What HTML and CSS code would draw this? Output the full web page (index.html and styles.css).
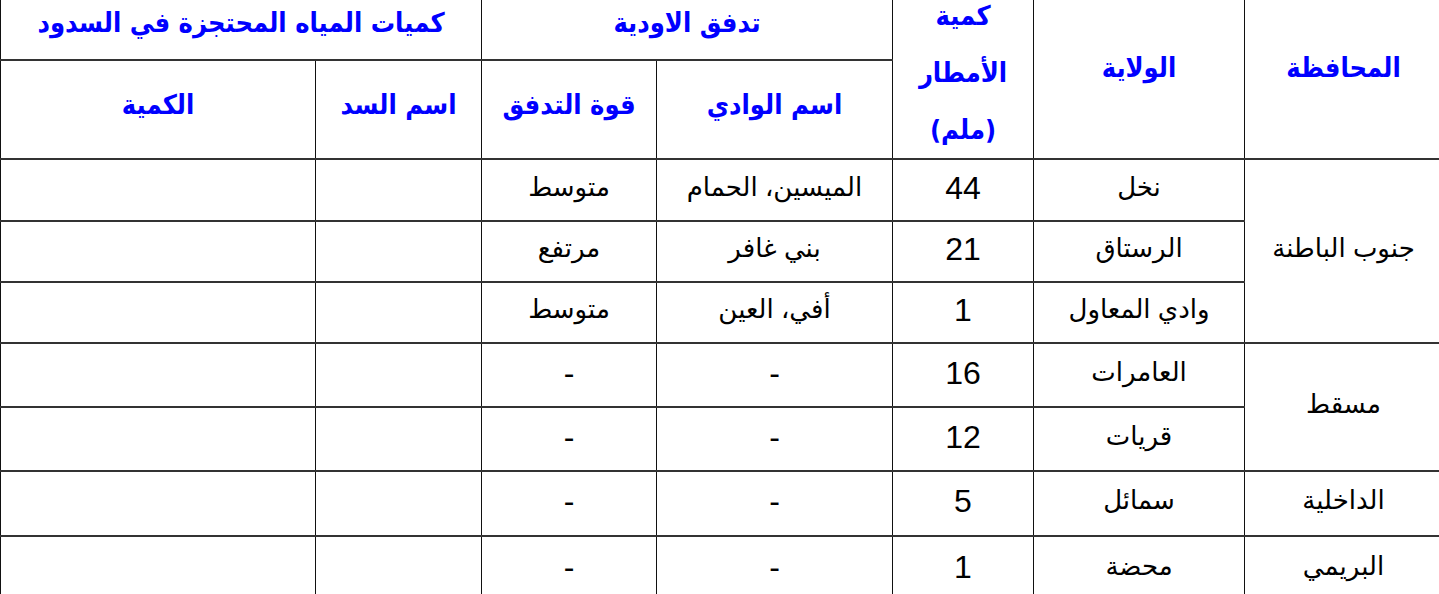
FILE: index.html
```html
<!DOCTYPE html>
<html lang="ar" dir="rtl">
<head>
<meta charset="utf-8">
<title>كميات الأمطار</title>
<link rel="stylesheet" href="styles.css">
</head>
<body>
<table class="rain">
  <colgroup>
    <col class="c-gov">
    <col class="c-wil">
    <col class="c-rain">
    <col class="c-wadi">
    <col class="c-flow">
    <col class="c-dam">
    <col class="c-qty">
  </colgroup>
  <thead>
    <tr class="h1">
      <th rowspan="2" class="main">المحافظة</th>
      <th rowspan="2" class="main">الولاية</th>
      <th rowspan="2" class="rain-h">كمية<br>الأمطار<br>(ملم)</th>
      <th colspan="2">تدفق الاودية</th>
      <th colspan="2">كميات المياه المحتجزة في السدود</th>
    </tr>
    <tr class="h2">
      <th class="sub">اسم الوادي</th>
      <th class="sub">قوة التدفق</th>
      <th class="sub">اسم السد</th>
      <th class="sub">الكمية</th>
    </tr>
  </thead>
  <tbody>
    <tr class="r1">
      <td rowspan="3">جنوب الباطنة</td>
      <td>نخل</td>
      <td class="num">44</td>
      <td>الميسين، الحمام</td>
      <td>متوسط</td>
      <td></td>
      <td></td>
    </tr>
    <tr class="r2">
      <td>الرستاق</td>
      <td class="num">21</td>
      <td>بني غافر</td>
      <td>مرتفع</td>
      <td></td>
      <td></td>
    </tr>
    <tr class="r3">
      <td>وادي المعاول</td>
      <td class="num">1</td>
      <td>أفي، العين</td>
      <td>متوسط</td>
      <td></td>
      <td></td>
    </tr>
    <tr class="r4">
      <td rowspan="2">مسقط</td>
      <td>العامرات</td>
      <td class="num">16</td>
      <td class="num">-</td>
      <td class="num">-</td>
      <td></td>
      <td></td>
    </tr>
    <tr class="r5">
      <td>قريات</td>
      <td class="num">12</td>
      <td class="num">-</td>
      <td class="num">-</td>
      <td></td>
      <td></td>
    </tr>
    <tr class="r6">
      <td>الداخلية</td>
      <td>سمائل</td>
      <td class="num">5</td>
      <td class="num">-</td>
      <td class="num">-</td>
      <td></td>
      <td></td>
    </tr>
    <tr class="r7">
      <td>البريمي</td>
      <td>محضة</td>
      <td class="num">1</td>
      <td class="num">-</td>
      <td class="num">-</td>
      <td></td>
      <td></td>
    </tr>
  </tbody>
</table>
</body>
</html>
```

FILE: styles.css
```css
html, body {
  margin: 0;
  padding: 0;
  background: #ffffff;
  overflow: hidden;
}

body {
  font-family: "Liberation Sans", "DejaVu Sans", sans-serif;
  color: #000;
}

.rain {
  direction: rtl;
  border-collapse: collapse;
  table-layout: fixed;
  width: 1442px;
  margin-top: -15px;
  margin-right: -4px;
}

.c-gov { width: 198px; }
.c-wil { width: 211px; }
.c-rain { width: 141px; }
.c-wadi { width: 236px; }
.c-flow { width: 175px; }
.c-dam { width: 166px; }
.c-qty { width: 315px; }

.rain th,
.rain td {
  border-left: 1px solid #111;
  border-right: 1px solid #111;
  border-top: 2px solid #333;
  border-bottom: 2px solid #333;
  text-align: center;
  vertical-align: middle;
  padding: 0;
}

.rain th {
  color: #0000ff;
  font-family: "DejaVu Sans Condensed", "DejaVu Sans", sans-serif;
  font-weight: bold;
  font-size: 27px;
  line-height: 40px;
}

.rain th.main { padding-bottom: 10px; }
.rain th.sub { padding-bottom: 8px; }

.h1 { height: 72px; }
.h2 { height: 97px; }

.rain .rain-h {
  line-height: 57px;
}

.rain td {
  font-size: 26px;
  line-height: 36px;
  padding-bottom: 7px;
}

.rain td.num {
  font-size: 32px;
  padding-bottom: 5px;
}

.r1 { height: 62px; }
.r2, .r3 { height: 61px; }
.r4, .r5 { height: 64px; }
.r6 { height: 65px; }
.r7 { height: 66px; }
```
